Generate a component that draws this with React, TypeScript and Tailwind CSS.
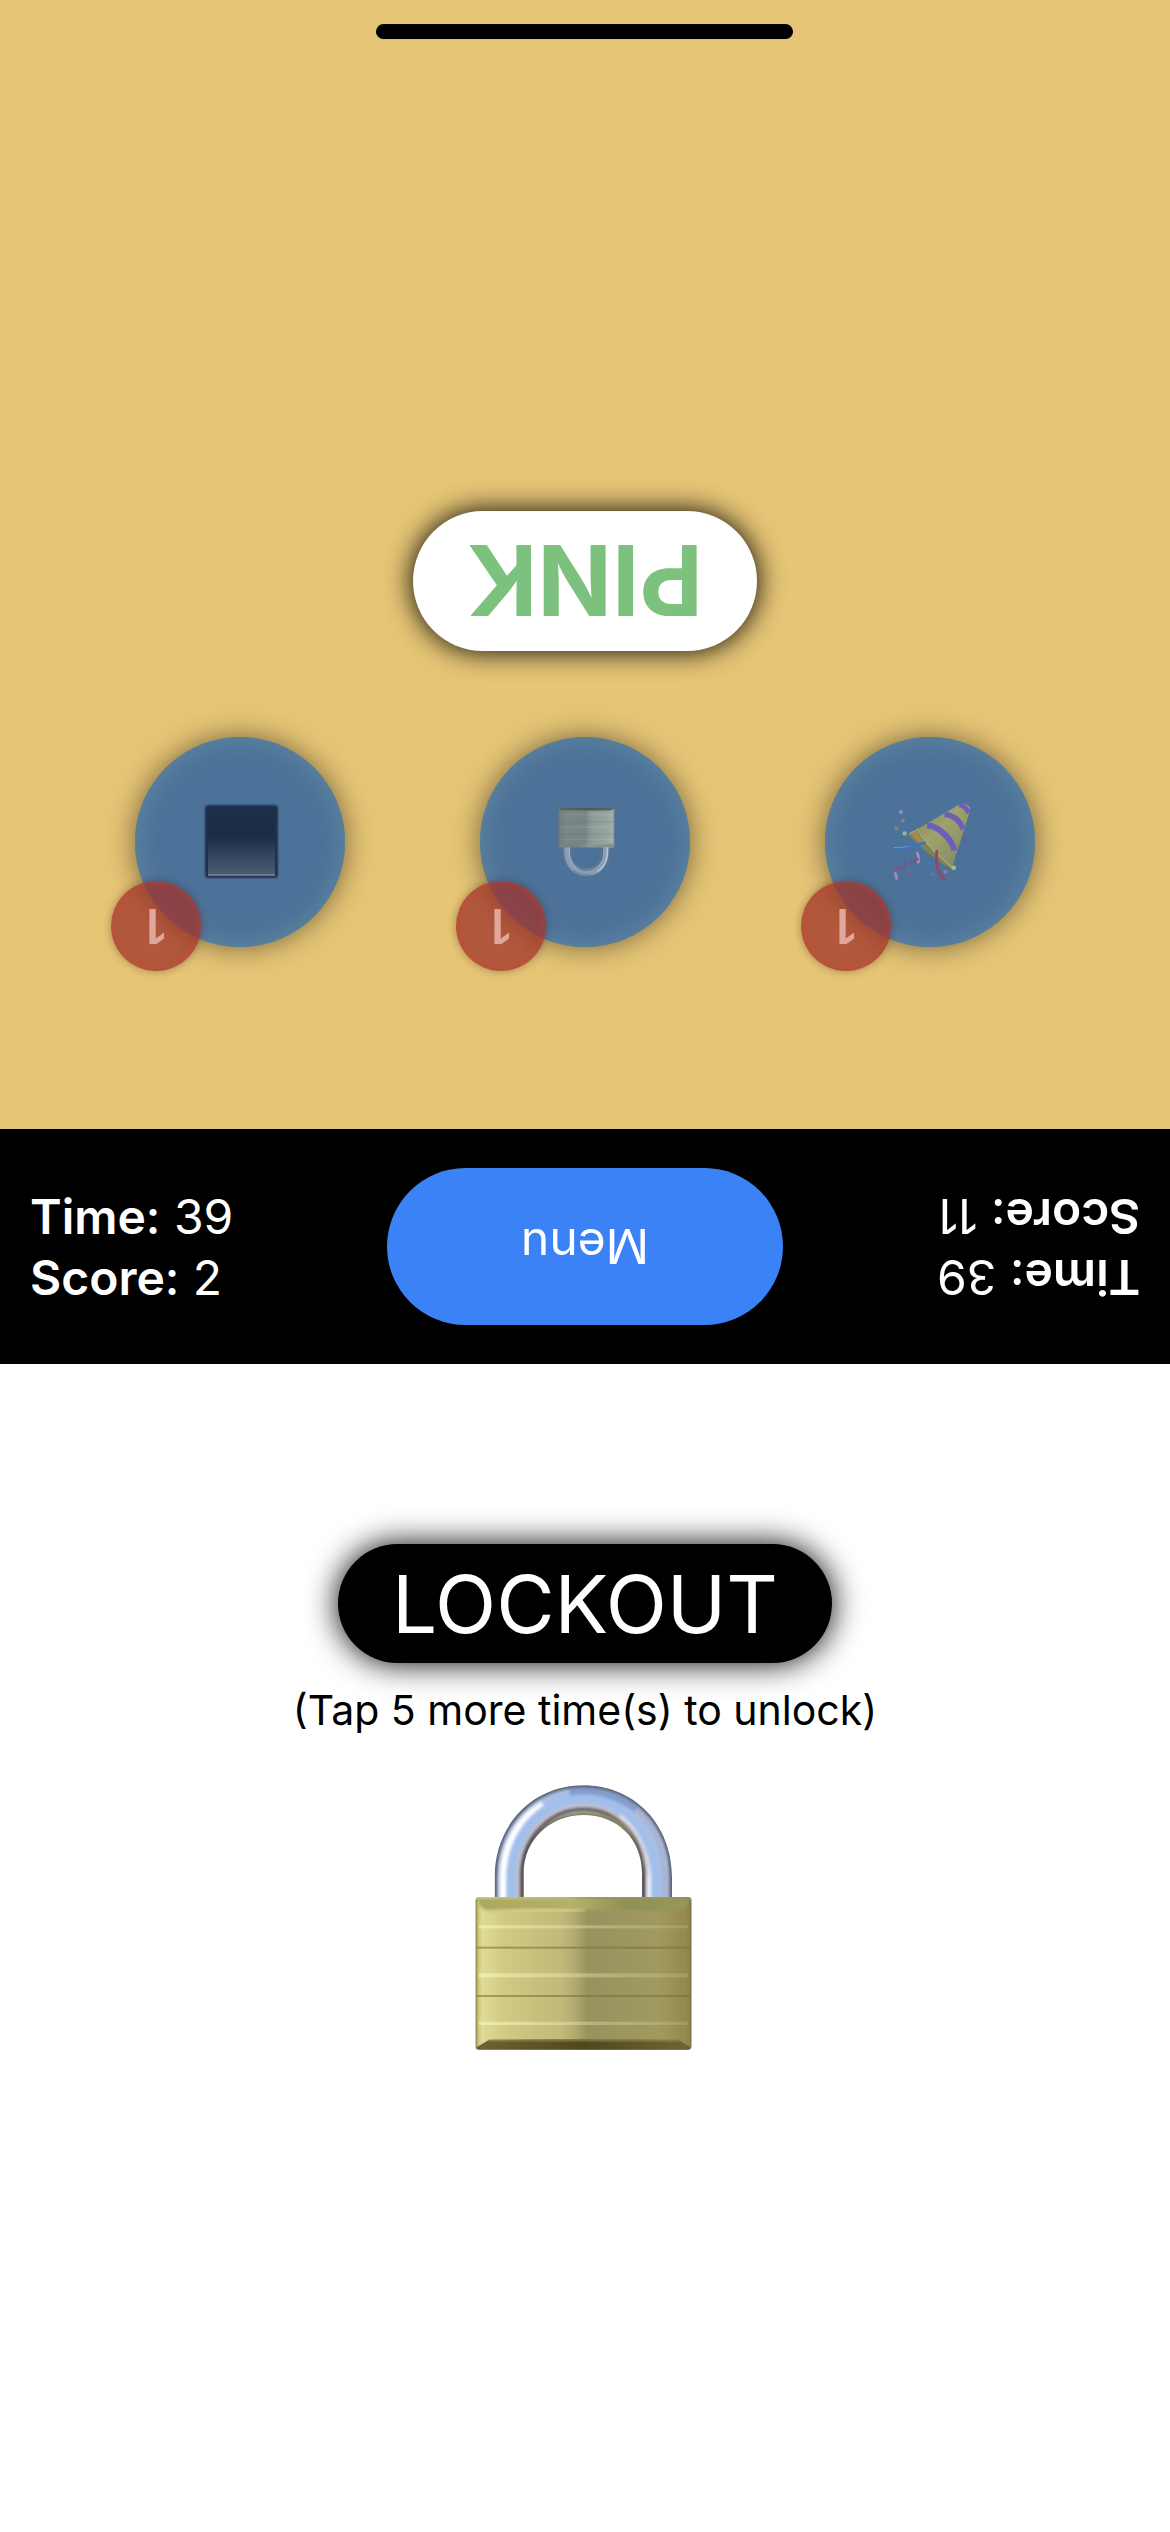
import React from "react";

function Padlock({ id, className }: { id: string; className: string }) {
  const ref = (name: string) => `url(#${id}-${name})`;
  return (
    <svg viewBox="160 100 660 810" className={className} aria-hidden="true">
      <defs>
        <linearGradient id={`${id}-body`} x1="0" x2="1">
          <stop offset="0" stopColor="#b9b370" />
          <stop offset="0.03" stopColor="#e0dc96" />
          <stop offset="0.12" stopColor="#d1cb85" />
          <stop offset="0.4" stopColor="#c0b978" />
          <stop offset="0.46" stopColor="#b0ab70" />
          <stop offset="0.52" stopColor="#97935f" />
          <stop offset="0.85" stopColor="#a09a5f" />
          <stop offset="0.97" stopColor="#958a50" />
          <stop offset="1" stopColor="#8a7f4a" />
        </linearGradient>
        <linearGradient id={`${id}-top`} x1="0" x2="1">
          <stop offset="0" stopColor="#a9a860" />
          <stop offset="0.45" stopColor="#b5b16a" />
          <stop offset="0.7" stopColor="#8f9054" />
          <stop offset="1" stopColor="#98975c" />
        </linearGradient>
        <linearGradient id={`${id}-bottom`} x1="0" x2="1">
          <stop offset="0" stopColor="#6d6331" />
          <stop offset="0.5" stopColor="#51471f" />
          <stop offset="1" stopColor="#6f6433" />
        </linearGradient>
        <linearGradient id={`${id}-fade`} x1="0" x2="1">
          <stop offset="0" stopColor="#f3efb4" stopOpacity="0.8" />
          <stop offset="0.5" stopColor="#e6e0a2" stopOpacity="0.45" />
          <stop offset="1" stopColor="#c9c283" stopOpacity="0.3" />
        </linearGradient>
        <filter id={`${id}-soft`} x="-10%" y="-10%" width="120%" height="120%">
          <feGaussianBlur stdDeviation="5" />
        </filter>
        <filter id={`${id}-line`} x="-2%" y="-2%" width="104%" height="104%">
          <feGaussianBlur stdDeviation="2" />
        </filter>
        <clipPath id={`${id}-ring`}>
          <path d="M225 450 V385 C225 220 345 107 490 107 C640 107 757 220 757 385 V450 H667 V370 C667 265 590 196 492 196 C392 196 312 270 312 370 V450 Z" />
        </clipPath>
      </defs>
      <g clipPath={ref("ring")}>
        <rect x="220" y="100" width="545" height="355" fill="#a9c0e2" />
        <g fill="none" filter={ref("soft")}>
          <path d="M226 460 V385 C226 220 345 107 490 107 C640 107 756 220 756 385 V460" stroke="#5c5d70" strokeWidth="14" />
          <path d="M250 460 V385 C250 290 295 205 370 165" stroke="#ffffff" strokeWidth="20" />
          <path d="M272 460 V385 C275 240 375 150 490 140 C600 145 700 240 706 385 V460" stroke="#a2bfec" strokeWidth="26" />
          <path d="M450 128 C520 118 580 130 650 178" stroke="#839dcb" strokeWidth="20" />
          <path d="M650 178 C710 235 732 300 735 385 V460" stroke="#a9b3d2" strokeWidth="14" />
          <path d="M688 460 V375 C680 300 650 240 600 200" stroke="#f0eef4" strokeWidth="12" />
          <path d="M296 460 V375 C298 255 390 170 490 168 C595 170 680 255 684 375" stroke="#cfc8cf" strokeWidth="7" />
          <path d="M305 460 V370 C308 258 395 178 492 178 C590 178 668 258 673 370 V460" stroke="#584c4b" strokeWidth="10" />
          <path d="M350 265 C410 172 570 165 630 255 C650 285 660 310 666 350" stroke="#a39b68" strokeWidth="9" />
          <path d="M312 460 V370 C312 270 392 197 492 197 C590 197 667 265 667 370 V460" stroke="#38332a" strokeWidth="5" />
        </g>
      </g>
      <rect x="168" y="442" width="647" height="458" rx="10" fill={ref("body")} />
      <path d="M172 446 H811 Q800 480 770 484 Q490 476 205 484 Q180 478 172 446 Z" fill={ref("top")} filter={ref("soft")} />
      <path d="M200 482 Q490 470 500 486 H200 Z" fill="#ddd88f" opacity="0.8" filter={ref("soft")} />
      <g fill={ref("fade")} filter={ref("line")}>
        <rect x="178" y="527" width="628" height="9" />
        <rect x="178" y="671" width="628" height="12" />
        <rect x="178" y="816" width="628" height="10" />
      </g>
      <g fill="#7c7336" filter={ref("line")}>
        <rect x="172" y="591" width="640" height="6" opacity="0.6" />
        <rect x="172" y="736" width="640" height="6" opacity="0.6" />
      </g>
      <path d="M168 894 L206 872 Q490 866 778 872 L815 894 Q812 900 804 900 H178 Q170 900 168 894 Z" fill={ref("bottom")} />
      <path d="M206 874 Q490 866 778 874" fill="none" stroke="#8d8040" strokeWidth="9" filter={ref("soft")} />
      <path d="M170 450 V892 M813 450 V892" stroke="#83763e" strokeWidth="4" opacity="0.7" />
    </svg>
  );
}

function DarkSquare() {
  return (
    <svg viewBox="0 0 75 75" className="h-[75px] w-[75px]" aria-hidden="true">
      <defs>
        <linearGradient id="square-fill" x1="0" y1="0" x2="0" y2="1">
          <stop offset="0" stopColor="#4a5c72" />
          <stop offset="0.3" stopColor="#33465f" />
          <stop offset="0.6" stopColor="#192c46" />
          <stop offset="1" stopColor="#1d3049" />
        </linearGradient>
        <filter id="square-soft" x="-5%" y="-5%" width="110%" height="110%">
          <feGaussianBlur stdDeviation="1" />
        </filter>
      </defs>
      <rect x="1" y="1" width="73" height="73" rx="3" fill="#1a2f48" filter="url(#square-soft)" />
      <rect x="4" y="4" width="67" height="66" fill="url(#square-fill)" />
      <path d="M4 4 H71" stroke="#71859a" strokeWidth="2" opacity="0.8" />
    </svg>
  );
}

function PartyPopper() {
  return (
    <svg viewBox="330 300 250 250" className="h-[83px] w-[83px] rotate-180" aria-hidden="true">
      <defs>
        <linearGradient id="cone-fill" x1="0" y1="0" x2="1" y2="1">
          <stop offset="0.1" stopColor="#7c8364" />
          <stop offset="0.45" stopColor="#9fa26c" />
          <stop offset="0.8" stopColor="#868d66" />
        </linearGradient>
        <clipPath id="cone-clip">
          <path d="M386 403 L540 313 Q556 306 570 320 Q573 326 568 340 L516 508 Q496 500 440 455 L388 408 Z" />
        </clipPath>
      </defs>
      <g clipPath="url(#cone-clip)">
        <rect x="380" y="300" width="200" height="215" fill="url(#cone-fill)" />
        <g fill="none" stroke="#6b5fb8">
          <path d="M442 376 C475 378 515 415 524 452" strokeWidth="18" />
          <path d="M494 343 C520 346 541 362 550 388" strokeWidth="16" />
          <path d="M538 314 Q560 318 566 340" strokeWidth="14" />
        </g>
        <path d="M386 403 L414 390 Q425 425 516 508 Q470 490 440 455 L388 408 Z" fill="#837f50" />
        <path d="M392 402 L412 393 Q416 410 432 424 L418 430 Z" fill="#a28a56" />
      </g>
      <path d="M388 402 L414 388 Q425 425 518 503" fill="none" stroke="#a8a66b" strokeWidth="4" />
      <g fill="none" strokeLinecap="round">
        <path d="M342 445 C370 446 400 440 434 429" stroke="#3e74c4" strokeWidth="9" />
        <path d="M342 443 Q365 444 385 440" stroke="#6597dc" strokeWidth="3" />
        <path d="M471 455 C468 485 472 525 492 536" stroke="#94466f" strokeWidth="9" />
        <path d="M412 460 Q418 470 415 487" stroke="#a78dbd" strokeWidth="8" />
        <path d="M346 520 L350 536" stroke="#a98bb2" strokeWidth="8" />
        <path d="M345 513 Q355 500 366 504 T376 484 M388 492 Q402 486 414 478" stroke="#75558c" strokeWidth="6" />
        <path d="M541 511 Q560 509 567 521" stroke="#436fb2" strokeWidth="5" />
        <path d="M529 469 L538 455" stroke="#3f69ba" strokeWidth="5" />
      </g>
      <g>
        <circle cx="363" cy="336" r="6" fill="#988fc6" />
        <circle cx="369" cy="362" r="6" fill="#80837c" />
        <circle cx="349" cy="386" r="6" fill="#8a837c" />
        <circle cx="374" cy="401" r="7" fill="#8fb892" />
        <circle cx="413" cy="361" r="5" fill="#4478b8" />
        <circle cx="556" cy="420" r="6" fill="#665f98" />
        <circle cx="522" cy="504" r="7" fill="#a2bf7c" />
        <circle cx="497" cy="516" r="6" fill="#8f80a8" />
        <circle cx="459" cy="524" r="6" fill="#437fc6" />
        <circle cx="446" cy="489" r="6" fill="#3f79bf" />
        <circle cx="388" cy="524" r="6" fill="#7d6099" />
      </g>
    </svg>
  );
}

function PowerUp({ label, count, children }: { label: string; count: number; children: React.ReactNode }) {
  return (
    <button
      type="button"
      aria-label={label}
      className="relative flex size-[210px] items-center justify-center rounded-full bg-[#4d7299] pr-1 shadow-[0_0_28px_rgba(0,0,0,0.5),inset_0_0_26px_#6089a0]"
    >
      {children}
      <span className="absolute -top-6 -right-6 flex size-[90px] items-center justify-center rounded-full bg-[#9f3028]/73 text-5xl font-semibold text-[#dfa89b] shadow-[0_0_8px_rgba(60,30,20,0.4),inset_0_0_10px_rgba(200,70,50,0.5)]">
        {count}
      </span>
    </button>
  );
}

function Stats({ time, score, className }: { time: number; score: number; className: string }) {
  return (
    <div className={className}>
      <p>
        <span className="font-semibold">Time</span>
        <span className="font-medium">:</span> {time}
      </p>
      <p>
        <span className="font-semibold">Score</span>
        <span className="font-medium">:</span> {score}
      </p>
    </div>
  );
}

export default function App() {
  return (
    <main className="grid min-h-screen grid-rows-[29fr_auto_30fr] bg-white font-['Inter',sans-serif]">
      <section className="flex rotate-180 flex-col items-center bg-[#e6c576] pt-[182px] pb-6">
        <div className="flex gap-[135px]">
          <PowerUp label="Party" count={1}>
            <PartyPopper />
          </PowerUp>
          <PowerUp label="Lockout" count={1}>
            <Padlock id="small-lock" className="h-[70px] w-[57px] opacity-60 saturate-50" />
          </PowerUp>
          <PowerUp label="Blackout" count={1}>
            <DarkSquare />
          </PowerUp>
        </div>
        <div className="mt-[86px] flex h-[140px] items-center rounded-full bg-white px-[54px] text-[98px] font-bold text-[#7cc27e] shadow-[0_0_28px_#000]">
          PINK
        </div>
        <div className="mt-auto h-[15px] w-[417px] rounded-full bg-black" />
      </section>

      <nav className="grid grid-cols-[1fr_auto_1fr] items-center bg-black px-[30px] py-[39px] text-5xl leading-[61px] text-white">
        <Stats time={39} score={2} className="justify-self-start" />
        <button type="button" className="h-[157px] w-[396px] rounded-full bg-[#3b82f6]">
          <span className="block rotate-180">Menu</span>
        </button>
        <Stats time={39} score={11} className="rotate-180 justify-self-end" />
      </nav>

      <section className="flex flex-col items-center pt-[180px] text-black">
        <div className="flex h-[119px] items-center rounded-full bg-black px-[54px] text-[80px] text-white shadow-[0_0_32px_#000]">
          LOCKOUT
        </div>
        <p className="mt-5 text-[41px] leading-[54px]">(Tap 5 more time(s) to unlock)</p>
        <button type="button" aria-label="Unlock" className="mt-[46px] pr-1">
          <Padlock id="large-lock" className="h-[270px] w-[220px]" />
        </button>
      </section>
    </main>
  );
}
